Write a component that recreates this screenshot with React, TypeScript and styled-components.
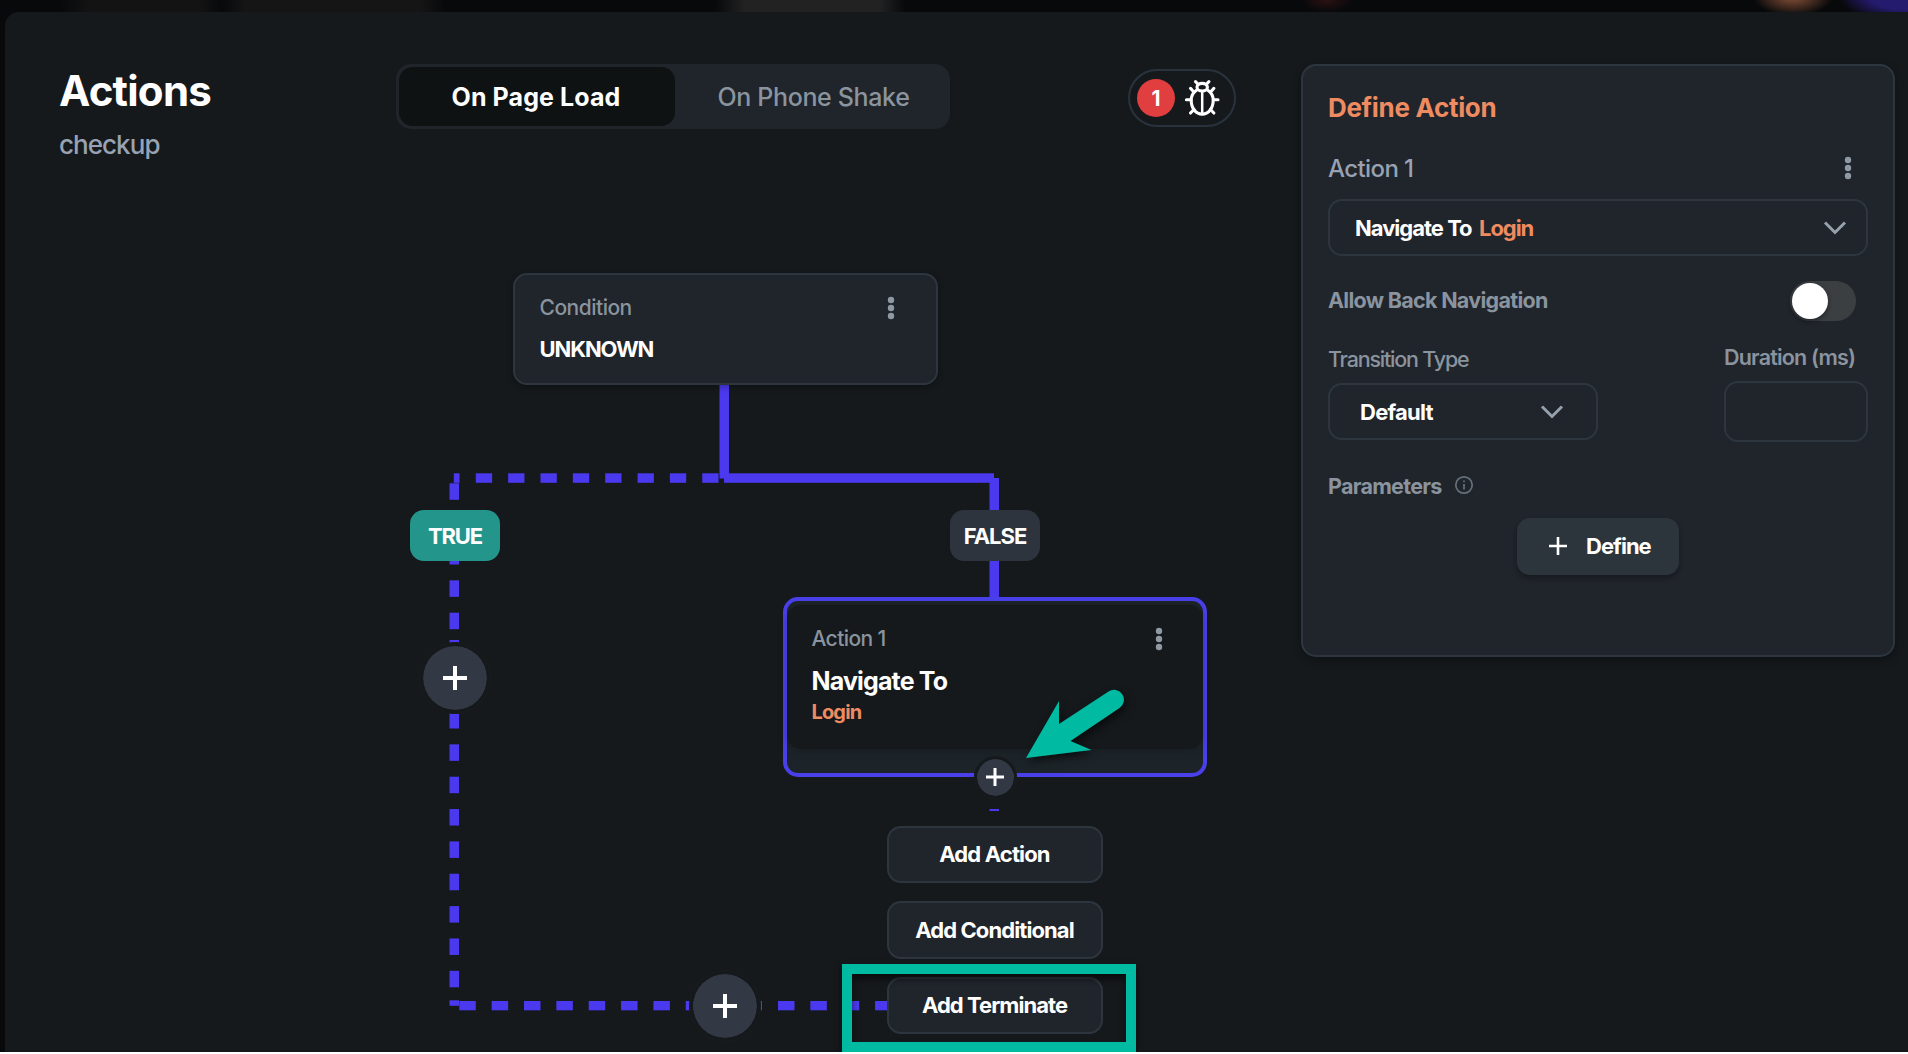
import React from "react";
import styled, { createGlobalStyle } from "styled-components";

const Global = createGlobalStyle`
  *, *::before, *::after { box-sizing: border-box; }
  html, body { margin: 0; background: #fff; overflow: hidden; }
  body { font-family: Inter, "Noto Sans", sans-serif; color: #fff; }
  button { font: inherit; color: inherit; border: 0; background: none; padding: 0; margin: 0; }
`;

const c = {
  bg: "#15191c",
  panel: "#20242b",
  line: "#2d363f",
  muted: "#8a949f",
  lavender: "#98a2b3",
  orange: "#ee8b60",
  violet: "#4b39ef",
  teal: "#00baa2",
};

const Page = styled.div`
  width: 1908px;
  height: 1052px;
  overflow: hidden;
  padding: 12px 0 0 5px;
  background:
    radial-gradient(ellipse 40px 20px at 1793px -4px, #6b412e 25%, transparent 100%),
    radial-gradient(ellipse 70px 26px at 1908px -4px, #241b6e 55%, transparent 100%),
    radial-gradient(ellipse 26px 12px at 1327px 0, #2c1113, transparent),
    linear-gradient(90deg, transparent 715px, #222223 745px, #222223 880px, transparent 905px),
    linear-gradient(90deg, transparent 60px, #131314 90px, #131314 200px, transparent 222px, #151516 245px, #151516 420px, transparent 445px),
    #07080a;
  background-size: 100% 12px;
  background-repeat: no-repeat;
  background-color: #08090b;
`;

const Modal = styled.div`
  display: flex;
  justify-content: space-between;
  height: 1040px;
  border-radius: 14px 0 0 0;
  background: ${c.bg};
  padding: 52px 13px 0 0;
`;

const Main = styled.main`
  display: flex;
  flex-direction: column;
  width: 1240px;
`;

const Header = styled.header`
  display: flex;
  align-items: flex-start;
  height: 108px;
  padding-left: 54px;
`;

const Text = styled.span<{ size: number; weight?: number; color?: string; track?: number; lh?: number }>`
  font-size: ${(p) => p.size}px;
  font-weight: ${(p) => p.weight ?? 700};
  color: ${(p) => p.color ?? "#fff"};
  letter-spacing: ${(p) => p.track ?? 0}px;
  line-height: ${(p) => (p.lh ? `${p.lh}px` : "1")};
  white-space: nowrap;
`;

const Titles = styled.div`
  display: flex;
  flex-direction: column;
  width: 337px;
  padding-top: 3px;
`;

const Tabs = styled.div`
  display: flex;
  width: 554px;
  height: 65px;
  padding: 3px;
  border-radius: 15px;
  background: ${c.panel};
`;

const Tab = styled.button<{ $active?: boolean }>`
  display: flex;
  align-items: center;
  justify-content: center;
  width: ${(p) => (p.$active ? 276 : 272)}px;
  padding-left: ${(p) => (p.$active ? 0 : 5)}px;
  padding-right: ${(p) => (p.$active ? 2 : 0)}px;
  border-radius: 14px;
  background: ${(p) => (p.$active ? "#0e1212" : "transparent")};
`;

const BugPill = styled.div`
  display: flex;
  align-items: center;
  gap: 9px;
  width: 108px;
  height: 58px;
  margin: 5px 0 0 178px;
  padding-left: 7px;
  border: 2px solid #29333d;
  border-radius: 29px;
`;

const Count = styled.span`
  display: grid;
  place-items: center;
  width: 38px;
  height: 38px;
  border-radius: 50%;
  background: #e03e3f;
`;

const Canvas = styled.section`
  position: relative;
  flex: 1;
`;

const Wires = styled.svg`
  position: absolute;
  left: -5px;
  top: -172px;
`;

const Node = styled.div<{ $x: number; $y: number; $w: number; $h: number }>`
  position: absolute;
  left: ${(p) => p.$x - 5}px;
  top: ${(p) => p.$y - 172}px;
  width: ${(p) => p.$w}px;
  height: ${(p) => p.$h}px;
`;

const ConditionCard = styled(Node)`
  display: flex;
  flex-direction: column;
  padding: 23px 26px 0 25px;
  border: 2px solid ${c.line};
  border-radius: 14px;
  background: ${c.panel};
  box-shadow: 0 2px 6px rgba(0, 0, 0, 0.3);
`;

const ActionCard = styled(Node)`
  padding: 4px 0 0;
  border: 4px solid #4a40ea;
  border-radius: 15px;
  background: #1d2429;
`;

const ActionBody = styled.div`
  display: flex;
  flex-direction: column;
  height: 144px;
  padding: 22px 25px 0 24.5px;
  border-radius: 14px;
  background: ${c.bg};
  box-shadow: 0 2px 10px rgba(0, 0, 0, 0.2);
`;

const Row = styled.div<{ $h: number; $pr?: number; $top?: number }>`
  display: flex;
  align-items: center;
  justify-content: space-between;
  height: ${(p) => p.$h}px;
  margin-top: ${(p) => p.$top ?? 0}px;
  padding-right: ${(p) => p.$pr ?? 0}px;
`;

const Badge = styled(Node)<{ $bg: string }>`
  display: grid;
  place-items: center;
  border-radius: 14px;
  background: ${(p) => p.$bg};
`;

const Circle = styled(Node)<{ $ring: number }>`
  display: grid;
  place-items: center;
  border-radius: 50%;
  border: ${(p) => p.$ring}px solid ${c.bg};
  outline: 1px solid #1a1d20;
  outline-offset: -1px;
  background: #333944;
  background-clip: padding-box;
`;

const Menu = styled(Node)`
  display: flex;
  flex-direction: column;
  gap: 18px;
`;

const MenuButton = styled.button`
  display: flex;
  align-items: center;
  justify-content: center;
  height: 57.5px;
  padding-right: 1px;
  border: 2px solid ${c.line};
  border-radius: 14px;
  background: ${c.panel};
`;

const Highlight = styled(Node)`
  border: 10px solid ${c.teal};
  box-shadow: inset 0 5px 6px rgba(0, 0, 0, 0.55), 0 3px 6px rgba(0, 0, 0, 0.6);
`;

const Side = styled.aside`
  display: flex;
  flex-direction: column;
  width: 594px;
  height: 593px;
  padding: 28px 25px 0 25px;
  border: 2px solid ${c.line};
  border-radius: 15px;
  background: ${c.panel};
  box-shadow: 0 3px 8px rgba(0, 0, 0, 0.3);
`;

const Field = styled.div<{ $w: number; $h: number; $px?: number; $pr?: number }>`
  display: flex;
  align-items: center;
  justify-content: space-between;
  width: ${(p) => p.$w}px;
  height: ${(p) => p.$h}px;
  padding: 0 ${(p) => p.$pr ?? 0}px 0 ${(p) => p.$px ?? 0}px;
  border: 2px solid ${c.line};
  border-radius: 14px;
`;

const Toggle = styled.div`
  width: 66px;
  height: 40px;
  padding: 2px;
  border-radius: 20px;
  background: #3b3f42;
`;

const Knob = styled.div`
  width: 36px;
  height: 36px;
  border-radius: 50%;
  background: #fff;
  box-shadow: 0 2px 5px rgba(0, 0, 0, 0.4);
`;

const Columns = styled.div`
  display: flex;
  justify-content: space-between;
  margin-top: 20px;
`;

const Column = styled.div<{ $top: number; $gap: number }>`
  display: flex;
  flex-direction: column;
  gap: ${(p) => p.$gap}px;
  padding-top: ${(p) => p.$top}px;
`;

const Inline = styled.div<{ $gap: number }>`
  display: flex;
  align-items: center;
  gap: ${(p) => p.$gap}px;
`;

const DefineButton = styled.button`
  display: flex;
  align-items: center;
  gap: 19px;
  align-self: flex-start;
  width: 162px;
  height: 57px;
  margin: 19px 0 0 189px;
  padding: 0 0 2px 32px;
  border-radius: 13px;
  background: #2d353c;
  box-shadow: 0 3px 5px rgba(0, 0, 0, 0.3);
`;

const InfoIcon = styled.svg`
  width: 20px;
  height: 20px;
  margin-bottom: 5px;
`;

const Plus = ({ size, stroke }: { size: number; stroke: number }) => (
  <svg width={size} height={size} viewBox={`0 0 ${size} ${size}`} stroke="#fff" strokeWidth={stroke}>
    <path d={`M${size / 2} 0V${size}M0 ${size / 2}H${size}`} />
  </svg>
);

const Dots = () => (
  <svg width="8" height="24" viewBox="0 0 8 24" fill="#8f99a4">
    <circle cx="4" cy="4" r="3.2" />
    <circle cx="4" cy="12" r="3.2" />
    <circle cx="4" cy="20" r="3.2" />
  </svg>
);

const Chevron = () => (
  <svg width="24" height="16" viewBox="0 0 24 16" fill="none" stroke="#95a1ac" strokeWidth="3">
    <path d="M2 2.5L12 12.5L22 2.5" />
  </svg>
);

const Bug = () => (
  <svg width="36" height="38" viewBox="0 0 36 38" fill="none" stroke="#fff" strokeWidth="3.1" strokeLinecap="round" strokeLinejoin="round">
    <ellipse cx="18.200" cy="8.200" rx="5.200" ry="3.800" />
    <path d="M12.500 11.200C9 13.500 7.200 17 7.200 21.300C7.200 29.500 12 35.200 18.200 35.200S29.200 29.500 29.200 21.300C29.200 17 27.400 13.500 23.900 11.200" />
    <path d="M18.200 13V35" strokeWidth="2.500" />
    <path d="M11.500 2.700L14.300 5.500M24.900 2.700L22.100 5.500M6.500 9.300L9.800 13M29.900 9.300L26.600 13M2.400 20.700H7M29.400 20.700H34M6.500 34L10 30.500M29.900 34L26.400 30.500" />
  </svg>
);

const Info = () => (
  <InfoIcon viewBox="0 0 20 20" fill="none" stroke="#66717a" strokeWidth="1.7">
    <circle cx="10" cy="10" r="8.2" />
    <path d="M10 9V14.500M10 5.500V7.300" />
  </InfoIcon>
);

const span = (start: number, count: number) => Array.from({ length: count }, (_, i) => start + i * 32.35);

export default function App() {
  return (
    <>
      <Global />
      <Page>
        <Modal>
          <Main>
            <Header>
              <Titles>
                <Text size={42} track={-0.75} lh={48}>Actions</Text>
                <Text size={26} weight={500} color={c.lavender} track={-0.95} lh={60}>checkup</Text>
              </Titles>
              <Tabs>
                <Tab $active><Text size={25} weight={700} track={0.1} lh={32}>On Page Load</Text></Tab>
                <Tab><Text size={25} weight={450} color={c.muted} track={-0.35} lh={32}>On Phone Shake</Text></Tab>
              </Tabs>
              <BugPill>
                <Count><Text size={21} weight={700}>1</Text></Count>
                <Bug />
              </BugPill>
            </Header>
            <Canvas>
              <Wires width="1240" height="1054" viewBox="0 0 1240 1054" fill={c.violet}>
                <rect x="719.500" y="384" width="9.500" height="94.500" />
                <rect x="724" y="473.300" width="270" height="9.500" />
                <rect x="989.500" y="478" width="9.500" height="120" />
                <rect x="989.500" y="809" width="9.500" height="2" />
                <rect x="453.800" y="473.300" width="5.700" height="9.500" />
                {span(475.8, 8).map((x) => <rect key={x} x={x} y="473.300" width="16.300" height="9.500" />)}
                {span(483.3, 5).map((y) => <rect key={y} x="449.500" y={y} width="9.500" height="16.500" />)}
                <rect x="449.500" y="640" width="9.500" height="3" />
                {span(712, 9).map((y) => <rect key={y} x="449.500" y={y} width="9.500" height="16.500" />)}
                <rect x="449.500" y="1000.300" width="9.500" height="5.500" />
                {span(459.3, 8).map((x) => <rect key={x} x={x} y="1001" width="16.500" height="9.300" />)}
                <rect x="759" y="1001" width="3" height="9.300" />
                {span(778, 4).map((x) => <rect key={x} x={x} y="1001" width="16.500" height="9.300" />)}
              </Wires>

              <ConditionCard $x={512.5} $y={273} $w={425} $h={111.5}>
                <Row $h={20} $pr={15}>
                  <Text size={21} weight={450} color={c.muted} track={-0.5} lh={22}>Condition</Text>
                  <Dots />
                </Row>
                <Row $h={24} $top={19}><Text size={22} weight={700} track={-1.1} lh={26}>UNKNOWN</Text></Row>
              </ConditionCard>

              <Badge $x={410} $y={510} $w={90} $h={51} $bg="#24958a"><Text size={22} track={-1.1}>TRUE</Text></Badge>
              <Badge $x={950} $y={510} $w={90} $h={51} $bg="#2d343d"><Text size={22} track={-1}>FALSE</Text></Badge>

              <ActionCard $x={783} $y={596.5} $w={424} $h={180.5}>
                <ActionBody>
                  <Row $h={24} $pr={15}>
                    <Text size={21} weight={450} color={c.muted} track={-0.6} lh={26}>Action 1</Text>
                    <Dots />
                  </Row>
                  <Row $h={30} $top={16}><Text size={25} weight={700} track={-0.85}>Navigate To</Text></Row>
                  <Row $h={24} $top={3}><Text size={20} weight={700} color={c.orange} track={-0.85}>Login</Text></Row>
                </ActionBody>
              </ActionCard>

              <Circle $x={418.5} $y={642} $w={72} $h={72} $ring={4}><Plus size={24} stroke={4} /></Circle>
              <Circle $x={689} $y={969.5} $w={72} $h={72} $ring={4}><Plus size={24} stroke={4} /></Circle>
              <Circle $x={973.5} $y={755.5} $w={43} $h={43} $ring={3.5}><Plus size={18} stroke={3} /></Circle>

              <Menu $x={887} $y={825.5} $w={216} $h={210}>
                <MenuButton><Text size={22} track={-0.85}>Add Action</Text></MenuButton>
                <MenuButton><Text size={22} track={-0.9}>Add Conditional</Text></MenuButton>
                <MenuButton><Text size={22} track={-0.95}>Add Terminate</Text></MenuButton>
              </Menu>

              <Highlight $x={842} $y={964} $w={294} $h={88} />
              <Node as="svg" $x={1015} $y={680} $w={130} $h={100} viewBox="1015 680 130 100">
                <path
                  d="M1026 758L1059 701V724L1108.500 691.500A9.800 9.800 0 0 1 1119.500 708L1070.500 741L1091.500 750Z"
                  fill={c.teal}
                  filter="drop-shadow(2px 4px 4px rgba(0,0,0,.6))"
                />
              </Node>
            </Canvas>
          </Main>

          <Side>
            <Text size={26} weight={700} color={c.orange} track={-0.32} lh={28}>Define Action</Text>
            <Row $h={26} $pr={16} $top={33}>
              <Text size={24} weight={450} color={c.lavender} track={-0.6} lh={27}>Action 1</Text>
              <Dots />
            </Row>
            <Row $h={57} $top={18}>
              <Field $w={540} $h={57} $px={25} $pr={19}>
                <Inline $gap={7.5}>
                  <Text size={22} weight={700} track={-1}>Navigate To</Text>
                  <Text size={22} weight={700} color={c.orange} track={-1.1}>Login</Text>
                </Inline>
                <Chevron />
              </Field>
            </Row>
            <Row $h={41} $pr={12} $top={24}>
              <Text size={21.5} weight={700} color={c.muted} track={-0.7}>Allow Back Navigation</Text>
              <Toggle><Knob /></Toggle>
            </Row>
            <Columns>
              <Column $top={6} $gap={12}>
                <Text size={21.5} weight={500} color={c.muted} track={-1.2} lh={24}>Transition Type</Text>
                <Field $w={270} $h={57} $px={30} $pr={32}>
                  <Text size={22} weight={700} track={-0.75}>Default</Text>
                  <Chevron />
                </Field>
              </Column>
              <Column $top={4} $gap={12}>
                <Text size={21.5} weight={600} color={c.muted} track={-0.8} lh={24}>Duration (ms)</Text>
                <Field $w={144} $h={61} />
              </Column>
            </Columns>
            <Row $h={24} $top={33}>
              <Inline $gap={12}>
                <Text size={21.5} weight={700} color={c.muted} track={-0.72}>Parameters</Text>
                <Info />
              </Inline>
            </Row>
            <DefineButton>
              <Plus size={18} stroke={2.6} />
              <Text size={22} weight={700} track={-1}>Define</Text>
            </DefineButton>
          </Side>
        </Modal>
      </Page>
    </>
  );
}
